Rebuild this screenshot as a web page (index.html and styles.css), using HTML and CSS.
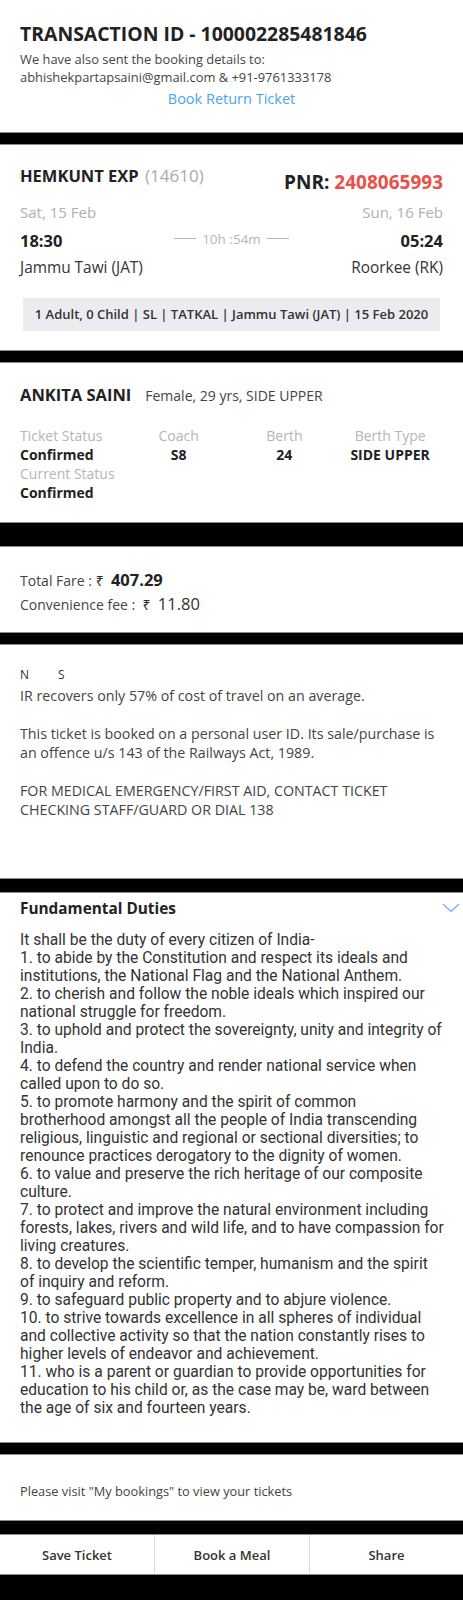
FILE: index.html
```html
<!DOCTYPE html>
<html>
<head>
<meta charset="utf-8">
<link rel="stylesheet" href="styles.css">
</head>
<body>
<div class="page">
  <section class="sec s-txn">
    <h1 class="txn-title">TRANSACTION ID - 100002285481846</h1>
    <p class="txn-sent">We have also sent the booking details to:<br>abhishekpartapsaini@gmail.com &amp; +91-9761333178</p>
    <div class="txn-link">Book Return Ticket</div>
  </section>
  <div class="bar bar-13"></div>

  <section class="sec s-train">
    <div class="train-row">
      <div class="train-name">HEMKUNT EXP <span class="train-no">(14610)</span></div>
      <div class="pnr">PNR: <span class="pnr-no">2408065993</span></div>
    </div>
    <div class="date-row"><span>Sat, 15 Feb</span><span>Sun, 16 Feb</span></div>
    <div class="time-row">
      <span class="time">18:30</span>
      <span class="dur"><i class="dash"></i>10h :54m<i class="dash"></i></span>
      <span class="time right">05:24</span>
    </div>
    <div class="stn-row"><span>Jammu Tawi (JAT)</span><span>Roorkee (RK)</span></div>
    <div class="summary">1 Adult, 0 Child | SL | TATKAL | Jammu Tawi (JAT) | 15 Feb 2020</div>
  </section>
  <div class="bar bar-13"></div>

  <section class="sec s-pax">
    <div class="pax-row"><span class="pax-name">ANKITA SAINI</span><span class="pax-info">Female, 29 yrs, SIDE UPPER</span></div>
    <div class="pax-grid">
      <span class="lbl first">Ticket Status</span><span class="lbl">Coach</span><span class="lbl">Berth</span><span class="lbl">Berth Type</span>
      <span class="val first">Confirmed</span><span class="val">S8</span><span class="val">24</span><span class="val">SIDE UPPER</span>
      <span class="lbl first">Current Status</span><span></span><span></span><span></span>
      <span class="val first">Confirmed</span><span></span><span></span><span></span>
    </div>
  </section>
  <div class="bar bar-25"></div>

  <section class="sec s-fare">
    <div class="fare-line">Total Fare : <span class="rs">₹</span>  <b class="amt">407.29</b></div>
    <div class="fare-line">Convenience fee :  <span class="rs">₹</span>  <span class="amt2">11.80</span></div>
  </section>
  <div class="bar bar-13"></div>

  <section class="sec s-notes">
    <div class="ns"><span>N</span><span class="ns-s">S</span></div>
    <p class="note">IR recovers only 57% of cost of travel on an average.</p>
    <p class="note">This ticket is booked on a personal user ID. Its sale/purchase is<br>an offence u/s 143 of the Railways Act, 1989.</p>
    <p class="note">FOR MEDICAL EMERGENCY/FIRST AID, CONTACT TICKET<br>CHECKING STAFF/GUARD OR DIAL 138</p>
  </section>
  <div class="bar bar-15"></div>

  <section class="sec s-duties">
    <div class="duties-head">
      <span class="duties-title">Fundamental Duties</span>
      <svg class="chev" width="18" height="10" viewBox="0 0 18 10"><path d="M1 1 L9 8.5 L17 1" fill="none" stroke="#7db4ea" stroke-width="1.4"/></svg>
    </div>
    <p class="duties">It shall be the duty of every citizen of India-<br>1. to abide by the Constitution and respect its ideals and<br>institutions, the National Flag and the National Anthem.<br>2. to cherish and follow the noble ideals which inspired our<br>national struggle for freedom.<br>3. to uphold and protect the sovereignty, unity and integrity of<br>India.<br>4. to defend the country and render national service when<br>called upon to do so.<br>5. to promote harmony and the spirit of common<br>brotherhood amongst all the people of India transcending<br>religious, linguistic and regional or sectional diversities; to<br>renounce practices derogatory to the dignity of women.<br>6. to value and preserve the rich heritage of our composite<br>culture.<br>7. to protect and improve the natural environment including<br>forests, lakes, rivers and wild life, and to have compassion for<br>living creatures.<br>8. to develop the scientific temper, humanism and the spirit<br>of inquiry and reform.<br>9. to safeguard public property and to abjure violence.<br>10. to strive towards excellence in all spheres of individual<br>and collective activity so that the nation constantly rises to<br>higher levels of endeavor and achievement.<br>11. who is a parent or guardian to provide opportunities for<br>education to his child or, as the case may be, ward between<br>the age of six and fourteen years.</p>
  </section>
  <div class="bar bar-13"></div>

  <section class="sec s-visit">
    <p class="visit">Please visit "My bookings" to view your tickets</p>
  </section>
  <div class="bar bar-15"></div>

  <nav class="actions">
    <div class="act">Save Ticket</div>
    <div class="act">Book a Meal</div>
    <div class="act">Share</div>
  </nav>
  <div class="bottom"></div>
</div>
</body>
</html>
```
FILE: styles.css
```css
* { box-sizing: border-box; }
html, body { margin: 0; padding: 0; background: #fff; }
body { font-family: "Open Sans", "Noto Sans", sans-serif; color: #444; }
p, h1 { margin: 0; }

.sec { padding: 0 20px; background: #fff; overflow: hidden; }
.bar { background: #000; border-top: 1px solid #8c8c8c; border-bottom: 1px solid #8c8c8c; }
.bar-13 { height: 13px; }
.bar-15 { height: 15px; }
.bar-25 { height: 25px; }

/* transaction */
.s-txn { height: 132px; padding-top: 22px; }
.txn-title { font-size: 19.4px; line-height: 24px; font-weight: 700; color: #222; }
.txn-sent { margin-top: 4px; font-size: 12.9px; line-height: 18px; color: #444; }
.txn-link { margin-top: 3px; font-size: 14.5px; line-height: 20px; color: #4aa6ec; text-align: center; }

/* train */
.s-train { height: 205px; padding-top: 20px; }
.train-row { display: flex; justify-content: space-between; align-items: flex-start; }
.train-name { font-size: 16.5px; line-height: 22px; font-weight: 700; color: #222; }
.train-no { font-weight: 400; font-size: 17px; color: #aaa; margin-left: 2px; }
.pnr { margin-top: 5px; font-size: 19px; line-height: 24px; font-weight: 700; color: #222; }
.pnr-no { color: #ea4f47; }
.date-row { margin-top: 8px; display: flex; justify-content: space-between; font-size: 15px; line-height: 20px; color: #b0b0b0; }
.time-row { margin-top: 8px; display: grid; grid-template-columns: 1fr auto 1fr; align-items: center; }
.time { font-size: 16.5px; line-height: 22px; font-weight: 700; color: #222; }
.time.right { text-align: right; }
.dur { display: flex; align-items: center; gap: 6px; font-size: 13.5px; line-height: 16px; color: #b5b5b5; margin-top: -5px; }
.dash { display: block; width: 22px; height: 1px; background: #b5b5b5; }
.stn-row { margin-top: 6px; display: flex; justify-content: space-between; font-size: 15.4px; line-height: 20px; color: #333; }
.summary { margin: 20px 3px 0; height: 33px; line-height: 33px; background: #ececf0; text-align: center; font-size: 13px; font-weight: 600; color: #333; }

/* passenger */
.s-pax { height: 159px; padding-top: 21px; }
.pax-row { display: flex; align-items: baseline; gap: 14px; line-height: 22px; }
.pax-name { font-size: 16.5px; font-weight: 700; color: #222; }
.pax-info { font-size: 14px; color: #444; }
.pax-grid { margin-top: 19px; display: grid; grid-template-columns: repeat(4, 1fr); font-size: 14px; line-height: 19px; text-align: center; }
.pax-grid .first { text-align: left; }
.lbl { color: #b5b5b5; white-space: nowrap; }
.val { color: #222; font-weight: 700; white-space: nowrap; }

/* fare */
.s-fare { height: 85px; padding-top: 21px; }
.fare-line { font-size: 14px; line-height: 23px; color: #444; white-space: pre; }
.rs { font-family: "Noto Sans", "Open Sans", sans-serif; color: #333; }
.amt { font-size: 16.5px; color: #222; }
.amt2 { font-size: 16.5px; color: #333; }

/* notes */
.s-notes { height: 233px; padding-top: 19px; }
.ns { font-size: 12px; line-height: 22px; color: #333; }
.ns-s { margin-left: 29px; }
.note { font-size: 14.25px; line-height: 19px; color: #444; }
.note + .note { margin-top: 19px; }

/* duties */
.s-duties { height: 549px; padding-top: 5px; }
.duties-head { display: flex; justify-content: space-between; align-items: flex-start; margin-right: -17px; }
.duties-title { font-size: 15.35px; line-height: 20px; font-weight: 700; color: #222; }
.chev { margin-top: 5px; }
.duties { margin-top: 13px; font-family: Roboto, "Noto Sans", sans-serif; font-size: 15.6px; line-height: 18px; color: #333; white-space: nowrap; }

/* visit */
.s-visit { height: 65px; padding-top: 27px; }
.visit { font-size: 12.8px; line-height: 18px; color: #444; }

/* actions */
.actions { display: grid; grid-template-columns: 154px 155px 1fr; height: 39px; background: #fff; }
.act { display: flex; align-items: center; justify-content: center; font-size: 13px; font-weight: 600; color: #333; }
.act + .act { border-left: 1px solid #ddd; }
.bottom { height: 26px; background: #000; border-top: 1px solid #8c8c8c; }
```
